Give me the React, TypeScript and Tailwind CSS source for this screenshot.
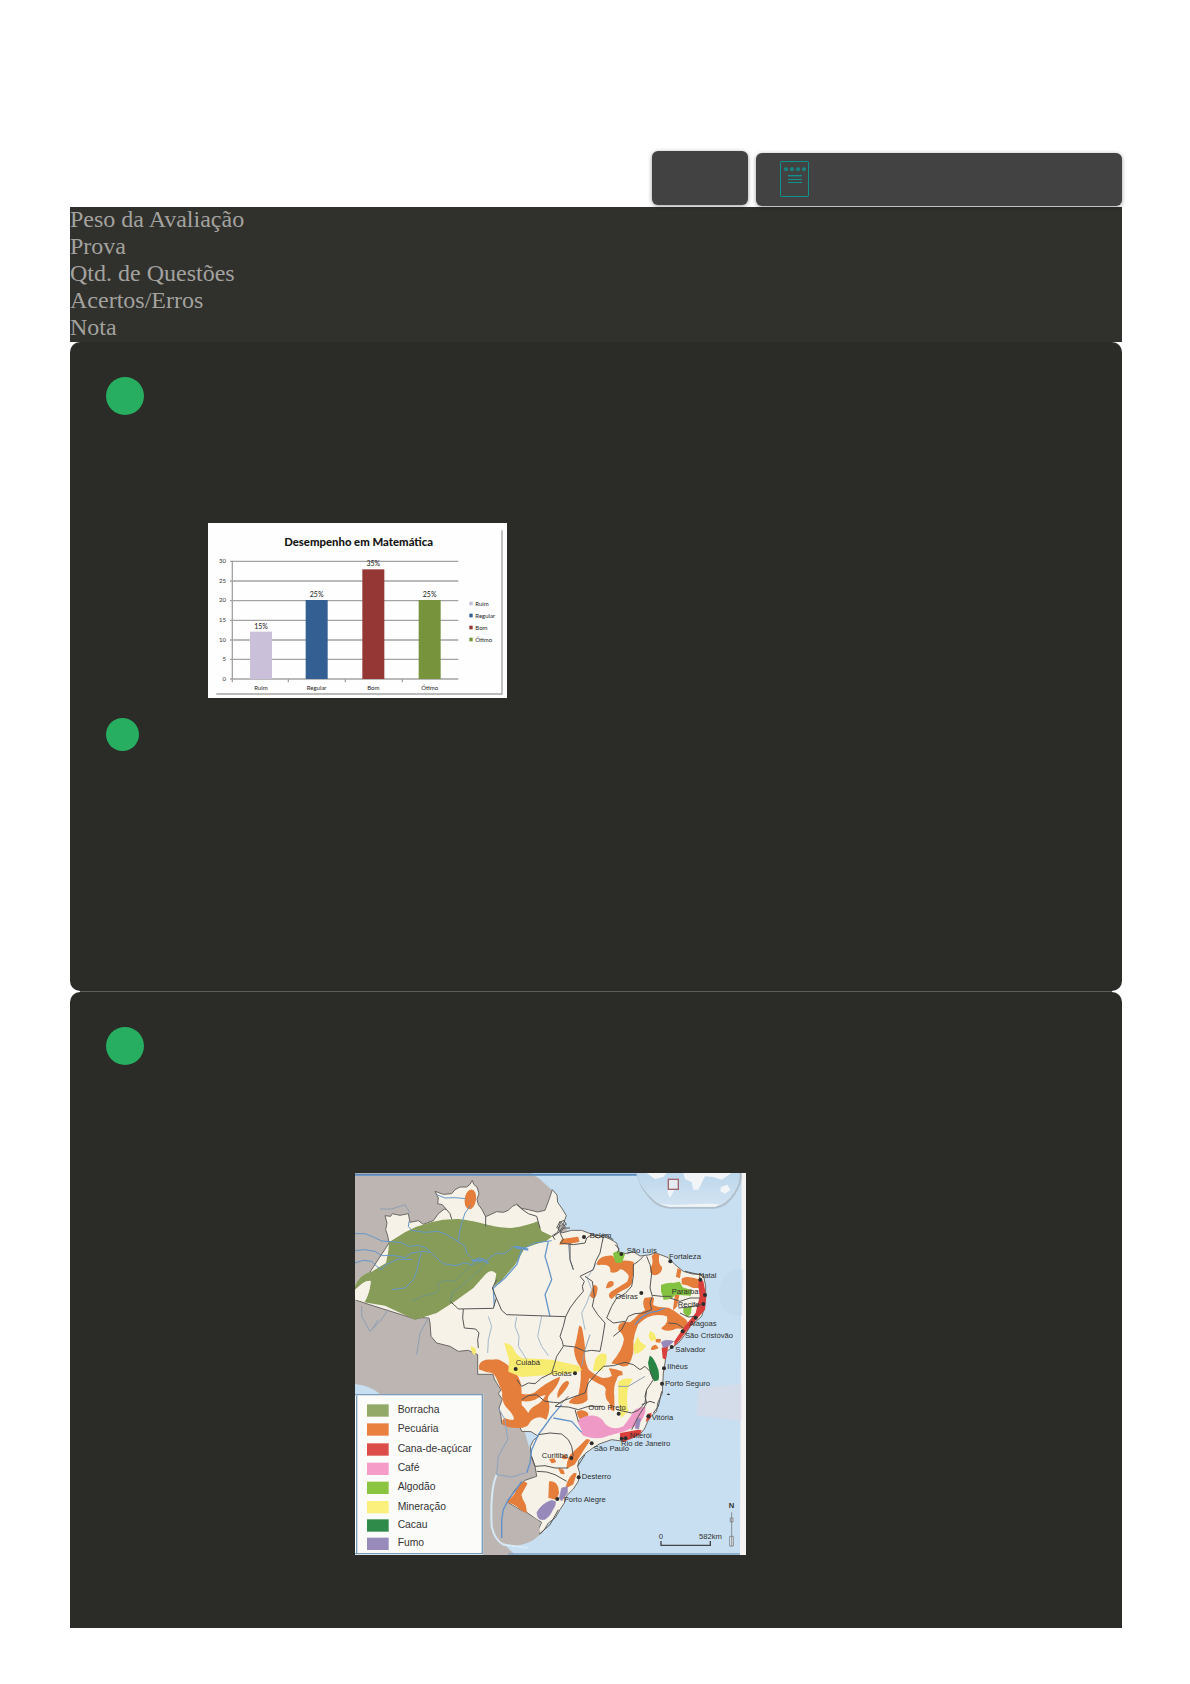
const summary = ["Peso da Avaliação", "Prova", "Qtd. de Questões", "Acertos/Erros", "Nota"];

const gridLines = [
  { y: 115, label: "30" },
  { y: 174, label: "25" },
  { y: 233, label: "20" },
  { y: 292, label: "15" },
  { y: 351, label: "10" },
  { y: 409, label: "5" },
  { y: 468, label: "0" },
];

const bars = [
  { x: 126, y: 326, value: "15%", name: "Ruim", fill: "#cbc0d9" },
  { x: 293, y: 231, value: "25%", name: "Regular", fill: "#345f92" },
  { x: 463, y: 139, value: "35%", name: "Bom", fill: "#943735" },
  { x: 632, y: 231, value: "25%", name: "Ótimo", fill: "#77933c" },
];

const crops = [
  { name: "Borracha", y: 694, fill: "#92a968" },
  { name: "Pecuária", y: 751, fill: "#ea8040" },
  { name: "Cana-de-açúcar", y: 811, fill: "#dc4c48" },
  { name: "Café", y: 869, fill: "#f59cc8" },
  { name: "Algodão", y: 926, fill: "#8bc53f" },
  { name: "Mineração", y: 984, fill: "#fbf07c" },
  { name: "Cacau", y: 1039, fill: "#2f8b4a" },
  { name: "Fumo", y: 1094, fill: "#988abb" },
];

const cities = [
  { name: "Belém", x: 704, y: 195, cx: 687, cy: 192 },
  { name: "São Luís", x: 815, y: 240, cx: 799, cy: 243 },
  { name: "Fortaleza", x: 942, y: 259, cx: 946, cy: 265 },
  { name: "Natal", x: 1031, y: 316, cx: 1036, cy: 320 },
  { name: "Paraíba", x: 950, y: 364, cx: 1050, cy: 366 },
  { name: "Recife", x: 968, y: 403, cx: 1045, cy: 393 },
  { name: "Alagoas", x: 1002, y: 459, cx: 1022, cy: 434 },
  { name: "São Cristóvão", x: 990, y: 495, cx: 983, cy: 475 },
  { name: "Salvador", x: 961, y: 536, cx: 950, cy: 522 },
  { name: "Oeiras", x: 781, y: 377, cx: 859, cy: 360 },
  { name: "Ilhéus", x: 937, y: 589, cx: 927, cy: 586 },
  { name: "Porto Seguro", x: 930, y: 640, cx: 921, cy: 632 },
  { name: "Cuiabá", x: 482, y: 575, cx: 482, cy: 588 },
  { name: "Goiás", x: 590, y: 608, cx: 660, cy: 601 },
  { name: "Ouro Preto", x: 700, y: 710, cx: 791, cy: 722 },
  { name: "Vitória", x: 890, y: 741, cx: 880, cy: 730 },
  { name: "Niterói", x: 824, y: 795, cx: 812, cy: 796 },
  { name: "Rio de Janeiro", x: 798, y: 818, cx: 800, cy: 797 },
  { name: "São Paulo", x: 716, y: 835, cx: 710, cy: 811 },
  { name: "Curitiba", x: 560, y: 854, cx: 649, cy: 855 },
  { name: "Desterro", x: 680, y: 917, cx: 671, cy: 913 },
  { name: "Porto Alegre", x: 626, y: 986, cx: 607, cy: 978 },
];

function NotepadIcon() {
  return (
    <svg viewBox="0 0 87 108" className="h-9 w-[29px]" fill="none" stroke="#0f918e" strokeWidth="3">
      <rect x="1.5" y="1.5" width="84" height="105" rx="2" />
      {[18, 36, 54, 72].map((cx) => (
        <circle key={cx} cx={cx} cy="24.5" r="5" fill="#1f7f7d" strokeWidth="2" />
      ))}
      <path d="M24 43.5h42" />
      <path d="M24 47h42" stroke="#2a6666" />
      <path d="M24 55.5h42M24 64.5h42" />
    </svg>
  );
}

function Marker({ className }: { className: string }) {
  return <div className={`rounded-full bg-[#27ae60] ${className}`} />;
}

function PerformanceChart() {
  return (
    <svg viewBox="0 0 897 525" className="block w-[299px]" fontFamily="Lato, sans-serif">
      <rect width="897" height="525" fill="#fefefe" />
      <path d="M25 513H882V22" fill="none" stroke="#a5a5a5" strokeWidth="4" />
      <text x="452" y="69" textAnchor="middle" fontSize="34" fontWeight="900" fill="#161616">
        Desempenho em Matemática
      </text>
      {gridLines.map((line) => (
        <g key={line.label}>
          <path d={`M66 ${line.y}H751`} stroke="#a3a3a3" strokeWidth="4" />
          <text x="54" y={line.y + 5} textAnchor="end" fontSize="18" fill="#333">
            {line.label}
          </text>
        </g>
      ))}
      <path d="M73 113V478M241 468v10M412 468v10M583 468v10" stroke="#a3a3a3" strokeWidth="4" />
      {bars.map((bar) => (
        <g key={bar.name} textAnchor="middle" fill="#222">
          <rect x={bar.x} y={bar.y} width="66" height={468 - bar.y} fill={bar.fill} />
          <text x={bar.x + 33} y={bar.y - 9} fontSize="21">
            {bar.value}
          </text>
          <text x={bar.x + 33} y="501" fontSize="18">
            {bar.name}
          </text>
        </g>
      ))}
      {bars.map((bar, i) => (
        <g key={bar.name}>
          <rect x="784" y={236 + i * 36} width="10" height="11" fill={bar.fill} />
          <text x="802" y={248 + i * 36} fontSize="18" fill="#222">
            {bar.name}
          </text>
        </g>
      ))}
    </svg>
  );
}

function BrazilMap() {
  return (
    <svg viewBox="0 0 1173 1146" className="block w-[391px]" fontFamily="'Liberation Sans', sans-serif">
      <defs>
        <linearGradient id="inset" x1="0" y1="0" x2="0" y2="1">
          <stop offset="0" stopColor="#bdd7ec" />
          <stop offset="1" stopColor="#d3e4f2" />
        </linearGradient>
      </defs>
      <rect width="1173" height="1146" fill="#c7dff0" />
      <path d="M1160 0h13v1146h-18z" fill="#f5f3f4" />
      <path d="M1165 290q-45-8-65 35t10 90q30 20 52 10z" fill="#bdd5e8" opacity=".4" />
      <path d="M1030 645l130-12v112l-135-18z" fill="#e1d9e4" opacity=".5" />

      {/* neighbouring countries */}
      <path d="M0 0H530Q565 22 590 48L612 120L640 180L560 330L470 640L530 850L548 905L530 960L460 980L560 1035L545 1090Q515 1120 470 1118Q440 1112 430 1096L480 1146H385V664H75Q45 640 0 634Z" fill="#bcb5b1" />
      <path d="M0 5H530Q550 8 570 30L590 48" fill="none" stroke="#c7dff0" strokeWidth="4" />
      <path d="M0 5H845" stroke="#5a8abb" strokeWidth="6" />
      <path d="M0 634Q48 638 75 664H0Z" fill="#c7dff0" />

      {/* brazil */}
      <path
        d="M90 128L107 130L112 122L135 127L160 122L165 148L190 143L205 154L235 143L250 122L268 108L275 110L262 95L248 92L250 75L240 55L265 64L290 62L300 50L315 42L335 42L345 34L352 22L356 34L366 42L372 62L366 78L370 95L380 108L392 131L408 124L425 116L445 118L460 112L472 100L485 94L500 106L520 110L548 117L570 112L582 80L592 50L606 66L608 88L622 108L634 128L625 152L608 165L620 180L650 172L680 172L700 180L722 186L745 190L765 198L785 210L793 238L815 242L835 236L855 249L880 246L903 240L940 254L960 275L985 295L1012 303L1045 304L1052 340L1052 370L1048 405L1040 430L1006 460L988 488L970 510L935 535L930 570L925 600L922 660L908 690L905 715L890 728L880 742L868 768L858 780L830 796L800 804L770 800L735 812L712 826L690 842L672 862L668 880L674 900L670 925L655 948L635 968L628 990L615 1010L600 1035L580 1050L568 1070L556 1083L549 1072L560 1048L540 1036L515 1018L495 1010L458 988L480 950L510 922L545 910L540 880L528 850L526 820L535 802L550 790L528 776L500 775L495 762L465 758L440 752L438 730L432 705L442 678L430 662L438 650L426 632L418 618L414 604L368 604L368 545L340 532L310 535L285 520L245 510L228 490L225 450L222 435L200 434L180 438L28 390L0 380L0 350L30 320L102 210L98 188L92 170L96 150Z"
        fill="#f6f2e7"
        stroke="#6b6966"
        strokeWidth="3"
        strokeLinejoin="round"
      />
      <path d="M458 990Q485 1005 500 1015L550 1042L556 1084Q510 1130 453 1107Q430 1090 440 1040Z" fill="#bcb5b1" />

      {/* crop areas */}
      <path d="M0 340Q15 303 50 296L93 270L100 235L102 208L150 178Q225 137 310 138C380 145 410 165 470 165Q520 158 548 145L560 175L592 190L575 203L510 224L480 275L440 322L417 340L424 302Q408 285 390 305L355 345L300 385L245 420L180 440L90 398L28 388Q43 365 48 325Q28 320 0 350Z" fill="#869c58" />
      <path d="M0 350Q28 322 46 323Q47 350 30 385L0 380Z" fill="#f6f2e7" />
      <g fill="#e57d3b" stroke="#e57d3b" strokeWidth="4" strokeLinejoin="round">
        <ellipse cx="346" cy="79" rx="15" ry="28" transform="rotate(8 346 79)" />
        <path d="M622 200L668 193L671 205L645 210L615 213Z" />
        <path d="M728 268Q740 248 772 250Q776 262 786 267Q810 262 834 268Q836 290 830 318Q833 340 803 350Q785 358 770 376Q757 368 770 357Q790 345 818 328Q826 310 821 304Q810 288 795 286Q785 300 768 296Q772 268 728 274Z" />
        <path d="M755 344Q760 320 774 328Q777 341 755 344Z" />
        <path d="M717 338Q730 338 724 358Q722 372 714 374L707 368Z" />
        <path d="M902 242L911 246Q906 270 919 283Q920 300 900 305Q882 303 890 282Q898 270 892 250Z" />
        <path d="M969 288L977 292L973 313L965 310Z" />
        <path d="M982 318Q998 309 1034 322L1032 343L1015 343Q1000 334 982 332Z" />
        <path d="M962 364L973 357L964 400L956 408Z" />
        <path d="M870 377Q885 373 895 376L892 396Q900 405 940 406Q960 415 976 430Q990 438 996 447Q990 470 966 464Q935 478 921 466Q946 448 937 428Q885 413 848 453Q836 480 833 505Q838 545 818 576Q800 583 790 572L772 570Q806 530 809 498Q805 480 792 470Q789 445 825 450Q840 440 852 425L873 412Q862 392 870 377Z" />
        <path d="M904 500l12 0-2 7-10-1zM890 529q0-9 12-12l6 8q-10 5-18 4z" />
        <path d="M674 460Q680 462 681 475Q690 520 688 550Q690 575 700 592Q720 610 742 617Q760 618 773 610L768 595L764 588Q780 590 800 597L801 605Q785 605 783 620Q772 640 776 670L776 712L767 708Q770 690 757 680Q750 660 755 650Q750 635 735 632Q715 622 702 612Q692 640 696 680Q680 698 644 688Q650 676 672 667Q684 610 677 580Q662 560 659 530Q667 500 674 460Z" />
        <path d="M374 578Q380 560 410 562Q425 560 432 562Q460 575 483 605Q498 620 498 664Q520 670 540 660Q575 630 613 614Q608 635 590 655Q576 668 576 680Q588 700 573 738Q558 728 545 732Q525 740 520 752Q515 762 490 763Q460 763 447 755Q438 740 452 738Q465 744 477 742Q483 733 465 712Q440 690 444 660Q438 640 430 625Q424 605 412 598Q390 596 374 588Z" />
        <path d="M609 672Q607 655 624 634Q638 620 640 630Q636 645 609 672Z" />
        <path d="M667 717Q685 708 698 722Q698 732 693 740Q675 748 667 717Z" />
        <path d="M637 884Q637 860 647 847Q670 825 695 800L703 802L688 825L658 873Z" />
        <path d="M585 860l12-2 4 8-10 3zM612 887l12 5 3 10-9-2zM622 850l7-3 6 9-10 1z" />
        <path d="M634 943Q640 915 657 902L663 902L653 933Z" />
        <path d="M584 927Q602 924 608 945L610 960L603 978L582 973Z" />
        <path d="M508 928L515 932Q505 950 497 965Q500 980 510 995L514 1018Q498 1012 485 998Q470 988 458 988Q478 968 482 960Q486 940 508 928Z" />
      </g>
      <path d="M500 684Q520 688 540 680Q560 667 572 666Q560 690 540 698Q525 706 520 720Q510 704 500 696Z" fill="#f6f2e7" />
      <g fill="#f7eb70" stroke="#f7eb70" strokeWidth="4" strokeLinejoin="round">
        <path d="M450 512Q465 512 475 530Q480 545 500 557L590 562L670 580L678 590L660 598L590 603L500 610L462 595L464 560Z" />
        <path d="M349 522l12 6-2 16-6-6zM716 593Q720 555 730 550Q745 538 753 547Q755 570 740 590Z" />
        <path d="M848 494Q853 512 871 518Q862 535 840 541L837 520ZM887 477Q898 480 902 498L890 503Q878 490 887 477Z" />
        <path d="M792 627Q810 614 831 620Q815 640 815 660Q812 690 818 713L800 731L792 690Z" />
      </g>
      <g fill="#83c141" stroke="#83c141" strokeWidth="4" strokeLinejoin="round">
        <path d="M776 242Q788 230 808 244L800 266Q790 270 782 266Z" />
        <path d="M920 337Q940 330 955 332L973 328L982 345L1008 353L1006 366L960 363Q950 380 927 378Q925 365 920 355Z" />
        <path d="M987 407L1008 402L1006 420L998 430L987 418Z" />
      </g>
      <path d="M1033 312L1045 325L1054 370L1050 410L1010 455L975 500L958 520L958 505L985 465L1022 420L1034 370L1030 340ZM920 524L940 518L932 560L923 556ZM872 748L878 722L890 720L887 735ZM795 780L850 770L860 772L855 785L820 800L805 808L795 795Z" fill="#d9403c" />
      <path d="M667 745Q685 725 720 728Q740 732 750 752Q775 775 805 760Q820 740 840 710Q855 700 872 702Q872 730 850 755L810 775L760 788Q730 802 690 790Q675 785 680 772Z" fill="#ef9ac6" />
      <path d="M884 548Q895 548 910 590Q914 610 910 622L898 625Q885 610 879 570Z" fill="#288443" />
      <g fill="#978abb" stroke="#978abb" strokeWidth="2" strokeLinejoin="round">
        <path d="M919 508Q930 498 956 505L940 520L925 524ZM846 737L857 737L851 768L841 766ZM620 945L637 941L637 960L620 984L613 975Z" />
        <path d="M546 1018Q560 992 590 982L602 986Q602 1000 592 1012Q585 1030 570 1039Q546 1045 546 1018Z" />
      </g>

      {/* rivers */}
      <g fill="none" stroke="#6697c8" strokeWidth="3" strokeLinejoin="round">
        <path d="M0 182L30 182L55 192L80 204L110 206L140 209L160 220L190 217L210 224L225 235L240 250L265 272L300 278L330 270L350 275L370 254L395 262L410 250L425 240L440 243L455 238L475 220L510 225L540 210L590 203" />
        <path d="M0 233L30 230L60 235L80 248L115 247L150 254L170 240L200 235L225 238M0 270L25 262L50 265L65 280L80 290L90 276L130 258L170 260" />
        <path d="M198 240L192 265L185 295L175 320L150 345L110 350M162 145L160 160L170 172L210 178L250 175L275 185L300 200L330 220L335 240L350 255M245 65L270 75L300 74L332 77M346 98L330 120L322 145L315 170L310 205" />
        <path d="M350 262H385L400 270M480 222L520 230" strokeWidth="7" />
        <path d="M390 262L345 280L320 305L300 325L275 322L250 330L250 350L240 360L200 370L170 385M395 265L375 290L340 320L320 340L295 355L285 385" stroke="#709784" />
        <path d="M500 230L485 275L450 315L415 345L418 400M580 205L570 250L582 290L590 320L570 365L578 400L585 430" strokeWidth="4" />
        <path d="M400 430L410 460L400 500L398 540M485 432L480 460L492 490L490 520L515 560M560 430L548 490L560 520L580 548M695 310L710 350L695 390L680 420L690 470M725 270L700 310" stroke="#a4bacb" />
        <path d="M75 108L110 108L150 95L165 120M20 400L20 430L45 475L75 445L100 410M70 440L50 470M220 435L195 480L185 545M640 210L645 260L655 290M705 485L690 530L680 580M870 610L820 640L790 640" stroke="#8f9fb4" />
        <path d="M620 695L590 730L565 765L550 785L530 830L525 870L515 900M595 735L650 745L680 778M500 925L480 955L460 980L445 1010L440 1040L440 1095M930 405L905 415L885 418L860 432L840 455" stroke="#6292cb" strokeWidth="4" />
        <path d="M425 905Q405 950 410 1060Q418 1100 445 1115L520 1125" stroke="#d7e9f5" strokeWidth="6" />
        <path d="M430 705L450 740L458 800L430 850L425 905L470 912L510 900" stroke="#8ba4c1" />
      </g>

      {/* state borders */}
      <g fill="none" stroke="#555" strokeWidth="3" strokeLinejoin="round">
        <path d="M275 110L285 122L290 138M392 130V160M485 94L500 108L520 122L545 130L555 165M285 385L298 396L310 408L415 406L424 375L412 345L425 320M424 375L440 412L455 425L632 431" />
        <path d="M325 408L323 435L328 465L362 468L372 480L368 500L370 525M632 431L625 460L615 490L622 505L625 520L605 550L598 575L590 600L560 615L540 632L520 630L500 640L485 620" />
        <path d="M645 210L645 260L655 290M745 192L740 215L735 240L722 265L715 290L675 310L688 325L682 340L685 355L665 378L645 405L632 431M690 310L712 325L718 370L712 400L728 425L750 450L742 500L735 535L710 532L690 535L660 522L625 518" />
        <path d="M865 250L850 265L835 275L835 310L830 340L810 362L785 375L770 400L755 435L775 450L810 445M875 250L885 275L890 300L885 345L892 370L885 390L890 410L865 420L840 422L820 430L800 470L775 490M892 367L920 370L950 370M945 375L975 385L1005 375L1035 375M970 405L1005 402L1040 395M975 420L1000 432L1020 430M940 450L965 452L985 465" />
        <path d="M745 580L775 578L810 568L835 575L855 590L870 580L885 595L895 620L875 650L870 690L850 712L830 720L785 710M745 580L722 605L700 630L690 660L655 672L620 685L600 700L640 702L670 710L700 700L745 700M860 695L885 685L900 690M540 880L570 878L600 885L640 885M545 895L575 897L600 905L635 925M550 785L585 780L620 783L640 800L650 820L655 850M530 850L540 880" />
        <path d="M500 680L520 668L545 665L570 685L595 688L620 690L640 670M875 650L870 670L875 690L850 730L830 770M660 710L670 745" />
        <path d="M605 165l10-20 15 15-15 20 10 20-10 10 40 5 35-5 5-15 15-10 20 10 20-10 25 15M595 190l20-15 5-10 25 0M600 200l-8-12 16-10 8-28M612 150l14-8 8 12-12 6M780 215l12 12-4 12M990 295L1042 307M920 655L910 700L895 720M690 845L668 880M610 1010L585 1055L552 1084" />
      </g>

      {/* globe inset */}
      <path d="M845 0Q850 45 895 88Q915 106 945 107H1080Q1115 104 1142 62Q1165 25 1160 0Z" fill="#b1bfcb" />
      <path d="M846 0Q851 42 898 83Q918 100 945 101H1080Q1112 98 1138 58Q1158 25 1153 0Z" fill="url(#inset)" />
      <path d="M875 0H935L925 12L900 18ZM938 40L960 48L945 75L938 60ZM985 0H1130L1100 20L1075 12L1050 10L1030 50L1015 50L1010 28L990 18ZM1098 42L1118 35L1126 52L1110 62L1096 55ZM915 94L960 96L1050 92L1095 94L1080 101H945Z" fill="#f1f5f8" />
      <rect x="940" y="19" width="30" height="30" fill="#e6eaf1" stroke="#a2646c" strokeWidth="4" />

      {cities.map((city) => (
        <g key={city.name} fill="#2d2d2d">
          <circle cx={city.cx} cy={city.cy} r="6" />
          <text x={city.x} y={city.y} fontSize="23">
            {city.name}
          </text>
        </g>
      ))}
      <path d="M935 666l5-5 6 5z" fill="#2d2d2d" />

      {/* legend */}
      <path d="M0 664H382V1146H0Z" fill="#fbfbfa" />
      <path d="M0 665H382V1142H0M5 668V1142" fill="none" stroke="#7a9cbd" strokeWidth="4" />
      {crops.map((crop) => (
        <g key={crop.name}>
          <rect x="36" y={crop.y} width="65" height="37" fill={crop.fill} />
          <text x="128" y={crop.y + 26} fontSize="31" fill="#333">
            {crop.name}
          </text>
        </g>
      ))}

      {/* scale and compass */}
      <g fill="#333">
        <text x="911" y="1098" fontSize="23">
          0
        </text>
        <text x="1032" y="1098" fontSize="23">
          582km
        </text>
        <text x="1121" y="1006" fontSize="23" fontWeight="700">
          N
        </text>
      </g>
      <path d="M918 1104V1117H1066V1104" fill="none" stroke="#444" strokeWidth="4" />
      <path d="M1130 1018V1120M1126 1035h8v12h-8zM1124 1090h11v29h-11z" fill="#e4eef5" stroke="#666" strokeWidth="2" />
      <path d="M460 1143H1155" stroke="#7fa3c5" strokeWidth="5" />
    </svg>
  );
}

export default function App() {
  const buttonClassName = "rounded-md bg-[#424242] shadow-[0_1px_4px_rgba(0,0,0,0.4)] cursor-pointer";

  return (
    <main className="bg-white pt-[151px] pr-[68px] pb-14 pl-[70px]">
      <header className="relative z-10 flex items-start justify-end gap-2 pb-px">
        <button type="button" aria-label="Voltar" className={`h-[54px] w-24 ${buttonClassName}`} />
        <button type="button" aria-label="Prova" className={`mt-0.5 flex h-[53px] w-[366px] items-start px-6 pt-2 ${buttonClassName}`}>
          <NotepadIcon />
        </button>
      </header>

      <ul className="bg-[#30302c] font-['Liberation_Serif',serif] text-2xl leading-[25px] text-[#a3a29f]">
        {summary.map((label) => (
          <li key={label} className="pb-0.5">
            {label}
          </li>
        ))}
      </ul>

      <div className="flex flex-col gap-px bg-[linear-gradient(to_right,white_10px,#5c5c58_10px,#5c5c58_calc(100%-10px),white_calc(100%-10px))]">
        <section className="rounded-[10px] bg-[#2b2b27] px-9 pt-[35px] pb-60">
          <Marker className="size-[38px]" />
          <div className="mt-[108px] mb-5 ml-[102px]">
            <PerformanceChart />
          </div>
          <Marker className="size-[33px]" />
        </section>

        <section className="rounded-t-[10px] bg-[#2b2b27] px-9 pt-[35px] pb-[73px]">
          <Marker className="size-[38px]" />
          <div className="mt-[108px] ml-[249px]">
            <BrazilMap />
          </div>
        </section>
      </div>
    </main>
  );
}
